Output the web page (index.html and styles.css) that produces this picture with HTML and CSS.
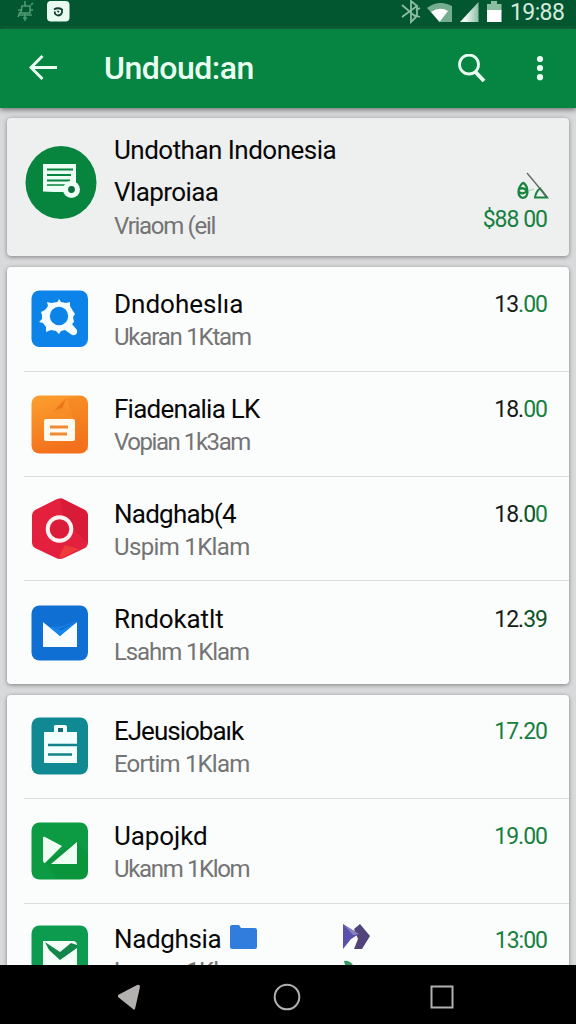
FILE: index.html
```html
<!DOCTYPE html>
<html lang="id">
<head>
<meta charset="utf-8">
<title>Undoudan</title>
<link rel="stylesheet" href="styles.css">
</head>
<body>
<div class="screen">
  <div class="status">
    <svg class="st-bug" width="18" height="24" viewBox="0 0 18 24" fill="none" stroke="#4d9a73" stroke-width="1.6"><path d="M5 6h8v7H4zM8 1v5M8 13v8M1 10h3M14 5l2-2M1 15h14M13 10h3M3 12l-2 5M6 18h4"/></svg>
    <svg class="st-app" width="23" height="21" viewBox="0 0 23 21"><rect width="22.500" height="20.500" rx="4" fill="#e9fbf0"/><path d="M7 8.500Q11 6 15 8.500v3q-1 3-4 3-4-1-3-4" fill="none" stroke="#123c2a" stroke-width="1.800"/><path d="M9.500 9.500l3 .5-1 2z" fill="#123c2a"/></svg>
    <div class="status-right">
      <svg width="20" height="24" viewBox="0 0 20 24" fill="none" stroke="#8bbda3" stroke-width="1.800"><path d="M1 5l14 12-5 5V1l6 5L1 17M15 10l4-2M13 15l6 2M16 5v12"/></svg>
      <svg width="26" height="20" viewBox="0 0 26 20"><path d="M0 5Q12 -4 25 3V19H13z" fill="#75ad90"/><path d="M4 9Q13 3 21 8L12.500 19z" fill="#fff"/></svg>
      <svg width="19" height="20" viewBox="0 0 19 20"><defs><linearGradient id="sg"><stop offset=".3" stop-color="#f1faf5"/><stop offset="1" stop-color="#8cbda3"/></linearGradient></defs><path d="M0 20L18.500 0V20z" fill="url(#sg)"/></svg>
      <svg width="15" height="21" viewBox="0 0 15 21"><path d="M0 3h4V0h6v3h4.500v7H0z" fill="#8bbda3"/><path d="M0 9h14.500v12H0z" fill="#fff"/></svg>
      <span class="clock">19:88</span>
    </div>
  </div>
  <header class="appbar">
    <svg class="back" width="28" height="28" viewBox="0 0 28 28" fill="none" stroke="#eafff2" stroke-width="3"><path d="M28 13.500H3M13.500 2L2 13.500 13.500 25"/></svg>
    <h1 class="heading">Undoud:an</h1>
    <svg class="search" width="28" height="29" viewBox="0 0 28 29" fill="none" stroke="#eafff2" stroke-width="2.800"><circle cx="11" cy="10.500" r="9.500"/><path d="M17.500 18l8.500 9" stroke-width="4"/></svg>
    <svg class="more" width="8" height="26" viewBox="0 0 8 26" fill="#eafff2"><circle cx="4" cy="4" r="3.100"/><circle cx="4" cy="13" r="3.100"/><circle cx="4" cy="22.200" r="3.100"/></svg>
  </header>
  <main class="content">
    <section class="card hero">
      <svg class="hero-icon" width="72" height="74" viewBox="0 0 72 74"><ellipse cx="36" cy="36.500" rx="35.500" ry="36.500" fill="#07853f"/><path d="M18 18H51V38H47V46H29L18 45.500z" fill="#edfff4"/><path d="M22 23.500H48M22 29H46M22 34.500H45" stroke="#07853f" stroke-width="2.200"/><path d="M22 39H40" stroke="#07853f" stroke-width="1.500"/><circle cx="46.500" cy="43.500" r="8.500" fill="#edfff4"/><circle cx="46.500" cy="43.500" r="3.400" fill="#126d3c"/></svg>
      <div class="hero-text">
        <div class="title h1a">Undothan Indonesia</div>
        <div class="title h1b">Vlaproiaa</div>
        <div class="sub h1c">Vriaom (eil</div>
      </div>
      <div class="hero-end">
        <svg width="33" height="28" viewBox="0 0 33 28" fill="none"><path d="M7 10.500c-6 6-6 14 0 15.500 6-1 6-11 0-15.500M2 18q5-4 9 1-4 4-8 1" stroke="#17843f" stroke-width="2.200"/><path d="M12 19l6-2" stroke="#9fceb0"/><path d="M19 25.500q1-6 5-9l7 9z" stroke="#17843f" stroke-width="2"/><path d="M11 1l20 24" stroke="#626663" stroke-width="1.300"/></svg>
        <div class="price amount">$88 00</div>
      </div>
    </section>

    <section class="card">
      <div class="row r1">
        <svg class="icon" width="58" height="58" viewBox="0 0 58 58"><rect x=".5" y=".5" width="56.500" height="56.500" rx="8" fill="#0c83e9"/><path d="M26.500 12L28 9l2 3 5 1 4-1v4l3 5 2 3-2 3 1 5-2 2 5 6q1 6-5 5l-7-5-4 1-2 3-3-3-5-1-5 2v-5l-3-4-4-1 3-3v-4l-1-3 4-2 3-4-1-4 4 1z" fill="#f5fcff"/><circle cx="28" cy="26" r="9.200" fill="#0c83e9"/></svg>
        <div class="text"><div class="title">Dndoheslıa</div><div class="sub">Ukaran 1Ktam</div></div>
        <div class="price"><span class="ink">13</span>.00</div>
      </div>
      <div class="row r2">
        <svg class="icon" width="58" height="59" viewBox="0 0 58 59"><defs><linearGradient id="og" x2=".3" y2="1"><stop stop-color="#fca12e"/><stop offset="1" stop-color="#f3701c"/></linearGradient></defs><rect x=".5" y=".5" width="56.500" height="58" rx="8" fill="url(#og)"/><path d="M36 3l14-2q7 1 7 8v48L42 24z" fill="#f27a1c" opacity=".35"/><path d="M22 17L35 3l-4 11-4 0z" fill="#ee741c"/><path d="M22 17l8-4 12 11H14z" fill="#f68d26"/><rect x="13" y="24" width="31" height="22" rx="2" fill="#fffaf0"/><path d="M19 32h18M19 39h17" stroke="#ef8b34" stroke-width="3.200"/></svg>
        <div class="text"><div class="title">Fiadenalia LK</div><div class="sub">Vopian 1k3am</div></div>
        <div class="price"><span class="ink">18.</span>00</div>
      </div>
      <div class="row r3">
        <svg class="icon" width="58" height="62" viewBox="0 0 58 62"><path d="M25 1.500q4-2 8 0L54 12q3 2 3 5v27q0 4-3 6L33 60q-4 2-8 0L4 50q-3-2-3-5V17q0-3 3-5z" fill="#e3203d"/><path d="M29 0q3 0 5 2L54 12q3 2 3 5v28L33 23z" fill="#cf1935" opacity=".55"/><path d="M34 47l14 4-19 10q-2-2 5-14z" fill="#ee3a3b"/><circle cx="28.500" cy="31" r="11.800" fill="#dc1d3a" stroke="#fff2f3" stroke-width="4"/></svg>
        <div class="text"><div class="title">Nadghab(4</div><div class="sub">Uspim 1Klam</div></div>
        <div class="price"><span class="ink">18</span><span class="dark">.0</span>0</div>
      </div>
      <div class="row r4">
        <svg class="icon" width="58" height="56" viewBox="0 0 58 56"><rect x=".5" y=".5" width="56.500" height="55" rx="8" fill="#106fd2"/><path d="M12 17l17 14 17-14v25H12z" fill="#f7fcff"/><path d="M18 21l11 1 17-6-17 15z" fill="#1686ef"/><path d="M12 17l17 7 17-8-16 9z" fill="#095cb5"/></svg>
        <div class="text"><div class="title">Rndokatlt</div><div class="sub">Lsahm 1Klam</div></div>
        <div class="price"><span class="ink">12.</span><span class="dark">39</span></div>
      </div>
    </section>

    <section class="card last">
      <div class="row r5">
        <svg class="icon" width="58" height="58" viewBox="0 0 58 58"><rect x=".5" y=".5" width="56.500" height="57" rx="8" fill="#108992"/><path d="M13 15H23V9q0-1 2-1h9q2 0 2 2v5h10V46H13z" fill="#f3ffff"/><rect x="27" y="11" width="5" height="4" fill="#176a71"/><path d="M17 28H46M17 37.500H41" stroke="#128188" stroke-width="2.500"/></svg>
        <div class="text"><div class="title">EJeusiobaık</div><div class="sub">Eortim 1Klam</div></div>
        <div class="price">17.20</div>
      </div>
      <div class="row r6">
        <svg class="icon" width="58" height="58" viewBox="0 0 58 58"><rect x=".5" y=".5" width="56.500" height="57" rx="8" fill="#0c9b42"/><path d="M14 40l12 17h23q8 0 8-8V32L46 20z" fill="#078b38" opacity=".4"/><path d="M12 16q0-2 2-1l17 9-17 17q-2 0-2-3zM46 20v22H20z" fill="#f0fff3"/></svg>
        <div class="text"><div class="title">Uapojkd</div><div class="sub">Ukanm 1Klom</div></div>
        <div class="price">19.00</div>
      </div>
      <div class="row r7">
        <svg class="icon" width="58" height="58" viewBox="0 0 58 58"><rect x=".5" y=".5" width="56.500" height="57" rx="8" fill="#0d9b50"/><path d="M12 16h31q3 1 3 4v27H12z" fill="#f5fff8"/><path d="M14 17l15 10 11-9 6 2v3L29 35 18 25z" fill="#12864b"/></svg>
        <div class="text"><div class="title">Nadghsia<svg class="folder" width="28" height="26" viewBox="0 0 28 26"><path d="M0 3q0-2 2-2h7l2 3h14q2 0 2 2v17q0 2-2 2H2q-2 0-2-2z" fill="#307ddd"/></svg></div><div class="sub">Lsanm 1Klam</div></div>
        <svg class="forward" width="28" height="42" viewBox="0 0 28 42"><path d="M11 5l6-5 10 12-8 13h-8l4-10z" fill="#51447b"/><path d="M0 0l16 10-8 5-8 10z" fill="#5a50ae"/><path d="M1 1l15 9-6 1z" fill="#8982bd"/><path d="M1 37q5-1 9 4H2z" fill="#36995d"/></svg>
        <div class="price">13:00</div>
      </div>
    </section>
  </main>
  <nav class="navbar">
    <svg width="24" height="28" viewBox="0 0 24 28"><path d="M1 12L20 2q3-1 3 2l-5 22q-1 1-2 0L1 14z" fill="#b3b1af"/></svg>
    <svg class="home" width="28" height="28" viewBox="0 0 28 28" fill="none" stroke="#b3b1af" stroke-width="2"><circle cx="14" cy="14" r="12.300"/></svg>
    <svg width="24" height="24" viewBox="0 0 24 24" fill="none" stroke="#b3b1af" stroke-width="2"><rect x="1.500" y="1.500" width="21" height="21"/></svg>
  </nav>
</div>
</body>
</html>
```
FILE: styles.css
```css
* { box-sizing: border-box; }
body { margin: 0; font-family: Roboto, "Noto Sans", sans-serif; }
svg { display: block; flex: none; }
.screen { width: 576px; height: 1024px; display: flex; flex-direction: column; overflow: hidden; background: #d8d9db; }
.status { height: 29px; flex: none; display: flex; align-items: flex-start; background: #035730; }
.st-bug { margin-left: 17px; }
.st-app { margin: 1px 0 0 12px; }
.status-right { flex: 1; display: flex; justify-content: flex-end; align-items: flex-start; padding: 1px 12px 0 0; }
.status-right svg:nth-child(1) { margin-right: 6px; margin-top: -1px; }
.status-right svg:nth-child(2) { margin-right: 7px; margin-top: 2px; }
.status-right svg:nth-child(3) { margin-right: 8px; margin-top: 1px; }
.status-right svg:nth-child(4) { margin-right: 8px; }
.clock { width: 54px; font-size: 23px; line-height: 24px; letter-spacing: -0.6px; color: #d4eadf; white-space: nowrap; }
.appbar { height: 79px; flex: none; display: flex; align-items: flex-start; background: #058442; box-shadow: 0 2px 5px #777; position: relative; }
.back { margin: 25px 0 0 29px; }
.heading { flex: 1; margin: 19px 0 0 47px; font-size: 32px; line-height: 40px; font-weight: 500; letter-spacing: -0.5px; color: #eafff2; white-space: nowrap; }
.search { margin: 25px 0 0; }
.more { margin: 26px 32px 0 50px; }
.content { flex: 1; min-height: 0; overflow: hidden; padding: 10px 7px 0; display: flex; flex-direction: column; gap: 11px; }
.card { flex: none; background: #fbfcfc; border-radius: 4px; box-shadow: 0 1px 4px #808080; }
.hero { height: 138px; display: flex; background: #eeefef; }
.hero-icon { margin: 28px 0 0 18px; }
.hero-text { flex: 1; padding: 15px 0 0 17px; }
.hero-text .title { height: 42px; }
.title { font-size: 26px; line-height: 34px; color: #080808; white-space: nowrap; }
.sub { font-size: 24px; line-height: 33px; color: #747474; white-space: nowrap; }
.hero-text .h1a { letter-spacing: -0.52px; }
.hero-text .h1b { letter-spacing: -0.6px; }
.hero-text .h1c { margin-top: -7px; letter-spacing: -1.3px; }
.hero-end { display: flex; flex-direction: column; align-items: flex-end; padding: 54px 20px 0 0; }
.hero-end .price { margin: 5px 2px 0 0; padding: 0; }
.row { height: 105px; display: flex; align-items: flex-start; }
.row + .row { border-top: 1px solid #d9dcdd; margin-left: 17px; }
.row + .row .icon { margin-left: 7px; }
.row.r1, .row.r3, .row.r4 { height: 104px; }
.row.r5 { height: 103px; }
.icon { margin: 23px 0 0 24px; }
.r3 .icon, .r7 .icon { margin-top: 21px; }
.r4 .icon { margin-top: 24px; }
.r5 .icon { margin-top: 22px; }
.text { flex: 1; padding: 20px 0 0 25px; }
.price { padding-top: 23px; margin-right: 22px; font-size: 23px; line-height: 29px; letter-spacing: -1px; color: #168040; white-space: nowrap; }
.ink { color: #171b19; }
.dark { color: #0c5428; }
.r1 .sub { letter-spacing: -1.2px; }
.r2 .title { letter-spacing: -0.75px; }
.r2 .sub { letter-spacing: -1.45px; }
.r3 .title { letter-spacing: -0.75px; }
.r3 .sub { letter-spacing: -0.65px; }
.r4 .text { padding-top: 21px; }
.r4 .title { letter-spacing: -0.1px; }
.r4 .sub { letter-spacing: -1.1px; }
.r4 .price { padding-top: 24px; }
.r5 .text { padding-top: 19px; }
.r5 .title { letter-spacing: -1px; }
.r5 .sub { letter-spacing: -0.8px; }
.r5 .price { padding-top: 22px; }
.r6 .title { letter-spacing: -0.1px; }
.r6 .sub { letter-spacing: -1.35px; }
.r7 .title { display: flex; letter-spacing: -0.35px; }
.r7 .sub { margin-top: -1px; letter-spacing: -1px; }
.r7 .text { flex: none; width: 254px; padding-top: 18px; }
.r7 .price { margin-left: auto; padding-top: 22px; }
.folder { margin: 2px 0 0 9px; }
.forward { margin-top: 20px; }
.navbar { height: 59px; flex: none; background: #000; display: flex; align-items: center; justify-content: space-between; padding: 5px 122px 0 117px; }
.home { margin-left: 3px; }
```
